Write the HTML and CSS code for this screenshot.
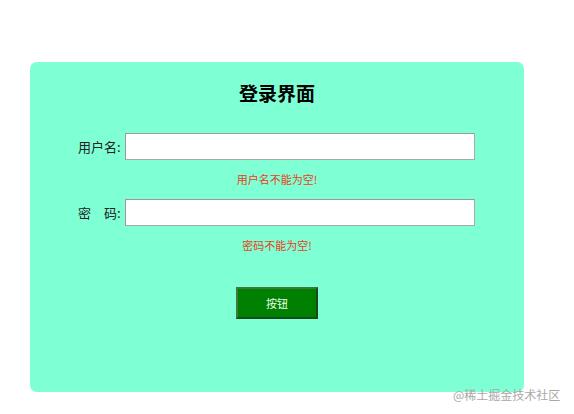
FILE: index.html
```html
<!DOCTYPE html>
<html lang="zh">
<head>
<meta charset="utf-8">
<link rel="stylesheet" href="styles.css">
</head>
<body>
<div class="card">
  <h1 class="title">登录界面</h1>
  <div class="row">
    <label class="label">用户名:</label>
    <input class="input" type="text">
  </div>
  <div class="error">用户名不能为空!</div>
  <div class="row row-pwd">
    <label class="label">密&emsp;码:</label>
    <input class="input" type="password">
  </div>
  <div class="error">密码不能为空!</div>
  <button class="btn">按钮</button>
</div>
<div class="watermark">@稀土掘金技术社区</div>
</body>
</html>
```
FILE: styles.css
```css
html, body {
  margin: 0;
  padding: 0;
  background: #ffffff;
  font-family: "Noto Sans CJK SC", "Noto Sans", sans-serif;
}
body {
  width: 574px;
  height: 414px;
  position: relative;
  overflow: hidden;
}
.card {
  margin: 62px 0 0 30px;
  width: 494px;
  height: 330px;
  box-sizing: border-box;
  background: #7fffd4;
  border-radius: 7px;
  padding-top: 17px;
  display: flex;
  flex-direction: column;
  align-items: center;
}
.title {
  margin: 0;
  font-size: 19px;
  line-height: 28px;
  font-weight: bold;
  color: #000;
}
.row {
  margin-top: 26px;
  display: flex;
  align-items: center;
  width: 494px;
  padding-left: 48px;
  box-sizing: border-box;
}
.row-pwd {
  margin-top: 12px;
}
.label {
  width: 45px;
  font-size: 13px;
  color: #222;
  text-align: left;
  white-space: nowrap;
}
.input {
  margin: 0 0 0 2px;
  width: 350px;
  height: 27px;
  box-sizing: border-box;
  border: 1px solid #9a9a9a;
  border-right-color: #a8a8a8;
  border-bottom-color: #a8a8a8;
  background: #fff;
  padding: 0 4px;
}
.error {
  margin-top: 11px;
  font-size: 11px;
  line-height: 16px;
  color: #e8401c;
}
.btn {
  margin-top: 34px;
  width: 82px;
  height: 32px;
  background: #008000;
  color: #e8ffe8;
  font-family: "Noto Sans CJK SC", sans-serif;
  font-size: 11px;
  border: 2px solid #2a6a2a;
  border-top-color: #3c7a3c;
  border-left-color: #3c7a3c;
  border-bottom-color: #1c4a1c;
  border-right-color: #1c4a1c;
  padding: 0;
}
.watermark {
  position: absolute;
  left: 453px;
  top: 387px;
  font-size: 12px;
  line-height: 16px;
  color: #a8a8a8;
  white-space: nowrap;
}
```
